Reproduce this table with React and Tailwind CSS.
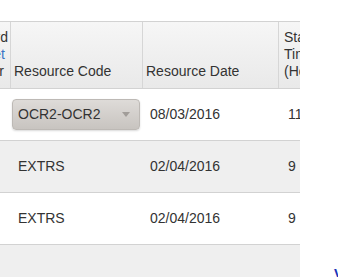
import React from 'react';

const rows = [
    { code: null, date: '08/03/2016', hours: '11', bg: 'bg-white' },
    { code: 'EXTRS', date: '02/04/2016', hours: '9', bg: 'bg-[#efefef]' },
    { code: 'EXTRS', date: '02/04/2016', hours: '9', bg: 'bg-white' },
    { code: null, date: '', hours: '', bg: 'bg-[#efefef]', empty: true },
];

// dropdown used in the first resource row
const CodeSelect = () => (
    <div className="flex h-[31px] w-[128px] items-center justify-between rounded-[4px] border border-[#bdb9b5] bg-gradient-to-b from-[#dedbd8] to-[#c8c4c0] pl-[5px] pr-[9px] shadow-[0_1px_2px_rgba(0,0,0,0.15)]">
        <span>OCR2-OCR2</span>
        <svg width="8" height="5" viewBox="0 0 8 5">
            <path d="M0 0 L8 0 L4 5 Z" fill="#a19d99" />
        </svg>
    </div>
);

const App = () => {
    return (
        <div className="flex bg-white text-[14px] text-[#333] font-['Liberation_Sans',Arial,sans-serif] leading-[17px]">
            <div className="w-[300px] shrink-0 overflow-hidden pt-[21px]">
                <div className="ml-[-69px] w-[460px]">
                    {/* header */}
                    <div className="flex h-[68px] border-y border-[#d2d2d2] bg-gradient-to-b from-[#f6f6f6] to-[#e9e9e9]">
                        <div className="flex w-[80px] shrink-0 flex-col justify-end border-r border-[#d6d6d6] pb-[8px] text-right">
                            <span className="pr-[2px]">Record</span>
                            <span className="pr-[5px] text-[#3a74c4]">Sheet</span>
                            <span className="pr-[6px]">Number</span>
                        </div>
                        <div className="flex w-[132px] shrink-0 items-end border-r border-[#d6d6d6] pb-[8px] pl-[3px]">
                            Resource Code
                        </div>
                        <div className="flex w-[136px] shrink-0 items-end border-r border-[#d6d6d6] pb-[8px] pl-[3px]">
                            Resource Date
                        </div>
                        <div className="flex w-[80px] shrink-0 flex-col justify-end pb-[8px] pl-[5px]">
                            <span>Start</span>
                            <span>Time</span>
                            <span>(Hours)</span>
                        </div>
                    </div>
                    {rows.map((row, i) => (
                        <div key={i} className={`flex h-[52px] items-center border-b border-[#d2d2d2] ${row.bg}`}>
                            <div className="w-[80px] shrink-0" />
                            <div className="w-[132px] shrink-0 pl-[1px]">
                                {row.empty ? null : row.code ? <span className="pl-[6px]">{row.code}</span> : <CodeSelect />}
                            </div>
                            <div className="w-[136px] shrink-0 pl-[7px]">{row.date}</div>
                            <div className="w-[80px] shrink-0 pl-[9px]">{row.hours}</div>
                        </div>
                    ))}
                </div>
            </div>
            <div className="ml-[34px] mt-[266px]">
                <a className="font-bold text-[#1a35b8]">View</a>
            </div>
        </div>
    );
};

export default App;
